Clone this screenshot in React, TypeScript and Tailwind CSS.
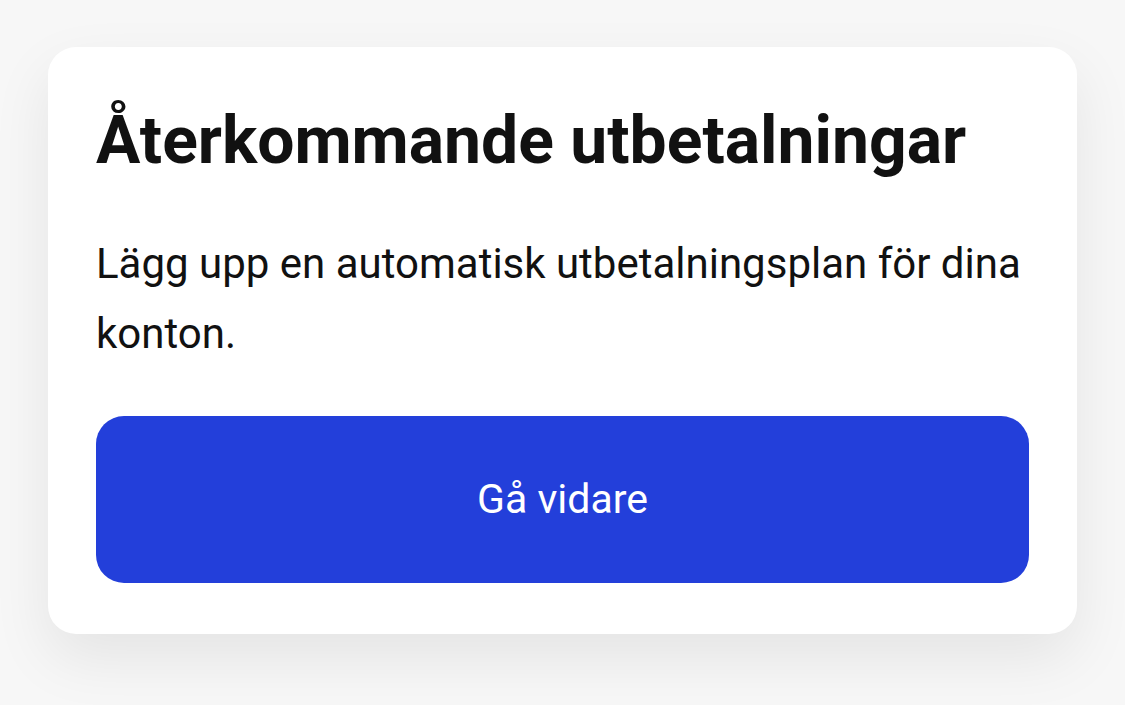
export default function App() {
  return (
    <div className="min-h-screen w-full bg-[#f7f7f7] pt-[47px] px-[48px] font-['Roboto',sans-serif]">
      <div className="bg-white rounded-[28px] shadow-[0_24px_60px_rgba(0,0,0,0.08)] px-[48px] pt-[54px] pb-[51px]">
        <h1 className="text-[66px] leading-[79px] font-bold text-[#111111]">
          Återkommande utbetalningar
        </h1>
        <p className="mt-[49px] text-[42px] leading-[70px] text-[#111111]">
          Lägg upp en automatisk utbetalningsplan för dina konton.
        </p>
        <button className="mt-[47px] w-full h-[167px] rounded-[28px] bg-[#233fda] text-white text-[41px]">
          Gå vidare
        </button>
      </div>
    </div>
  );
}
